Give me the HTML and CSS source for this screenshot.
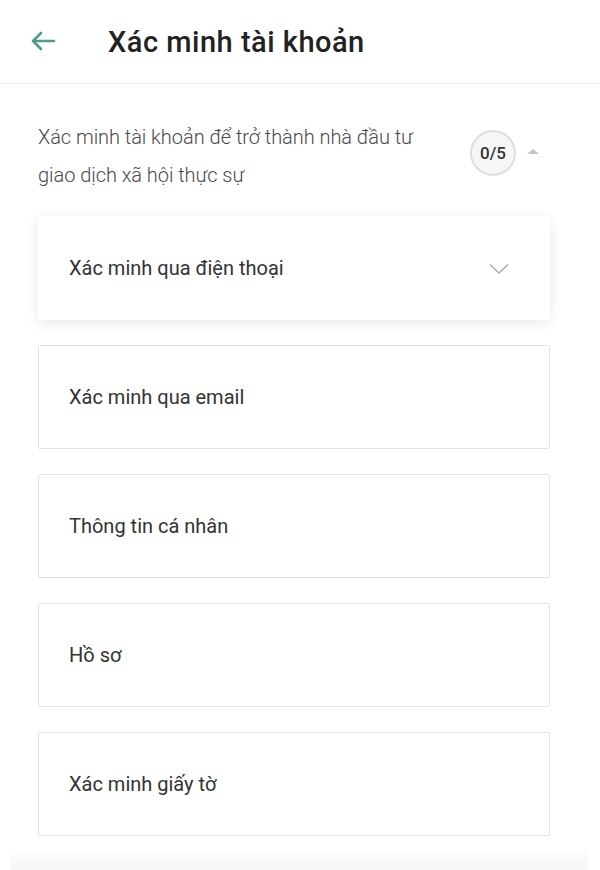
FILE: index.html
```html
<!DOCTYPE html>
<html lang="vi">
<head>
<meta charset="utf-8">
<link rel="stylesheet" href="styles.css">
</head>
<body>
<header class="header">
  <svg class="back" width="26" height="22" viewBox="0 0 26 22" fill="none" stroke="#4f9a8f" stroke-width="2.6" stroke-linecap="round" stroke-linejoin="round"><path d="M24 11H3M11 3L3 11l8 8"/></svg>
  <h1 class="title">Xác minh tài khoản</h1>
</header>
<main class="content">
  <section class="intro">
    <p class="intro-text">Xác minh tài khoản để trở thành nhà đầu tư giao dịch xã hội thực sự</p>
    <div class="badge">0/5</div>
    <span class="caret-up"></span>
  </section>
  <div class="list">
    <div class="card card-active">
      <span class="card-label">Xác minh qua điện thoại</span>
      <svg class="chev" width="20" height="12" viewBox="0 0 20 12" fill="none" stroke="#a8a8a8" stroke-width="1.4"><path d="M1 1.5l9 8.5 9-8.5"/></svg>
    </div>
    <div class="card"><span class="card-label">Xác minh qua email</span></div>
    <div class="card"><span class="card-label">Thông tin cá nhân</span></div>
    <div class="card"><span class="card-label">Hồ sơ</span></div>
    <div class="card"><span class="card-label">Xác minh giấy tờ</span></div>
  </div>
</main>
<div class="bottom-shade"></div>
</body>
</html>
```
FILE: styles.css
```css
* { box-sizing: border-box; }
html, body { margin: 0; padding: 0; background: #fff; }
body {
  width: 600px;
  height: 870px;
  overflow: hidden;
  font-family: Roboto, "Noto Sans", sans-serif;
  color: #333;
}
.header {
  height: 84px;
  border-bottom: 1px solid #ececec;
  display: flex;
  align-items: center;
  padding-left: 30px;
}
.back { display: block; margin-top: -2px; }
.title {
  margin: 0 0 0 52px;
  font-size: 29px;
  font-weight: 500;
  color: #222;
  letter-spacing: 0.5px;
}
.content {
  padding: 0 50px 0 38px;
}
.intro {
  display: flex;
  align-items: center;
  margin-top: 34px;
  margin-bottom: 22px;
}
.intro-text {
  margin: 0;
  width: 400px;
  font-size: 20px;
  line-height: 38px;
  color: #4a4a4a;
  letter-spacing: -0.05px;
  font-weight: 300;
}
.badge {
  margin-left: 32px;
  width: 46px;
  height: 46px;
  border-radius: 50%;
  border: 2px solid #dedede;
  background: #f6f6f6;
  display: flex;
  align-items: center;
  justify-content: center;
  font-size: 17px;
  font-weight: 500;
  color: #333;
  margin-top: -6px;
}
.caret-up {
  margin-left: 11px;
  margin-top: -10px;
  width: 0;
  height: 0;
  border-left: 6px solid transparent;
  border-right: 6px solid transparent;
  border-bottom: 5px solid #c4c4c4;
}
.list {
  display: flex;
  flex-direction: column;
  gap: 25px;
}
.card {
  height: 104px;
  border: 1px solid #e3e3e3;
  border-radius: 2px;
  background: #fff;
  display: flex;
  align-items: center;
  justify-content: space-between;
  padding: 0 40px 0 30px;
}
.card-active {
  border-color: transparent;
  box-shadow: 0 3px 14px rgba(0, 0, 0, 0.09);
}
.card-label {
  font-size: 20px;
  color: #333;
  letter-spacing: 0;
}
.chev { display: block; margin-top: 2px; }
.bottom-shade {
  position: absolute;
  left: 10px;
  right: 12px;
  top: 846px;
  height: 24px;
  background: linear-gradient(to bottom, #fff, #f6f6f6);
}
```
